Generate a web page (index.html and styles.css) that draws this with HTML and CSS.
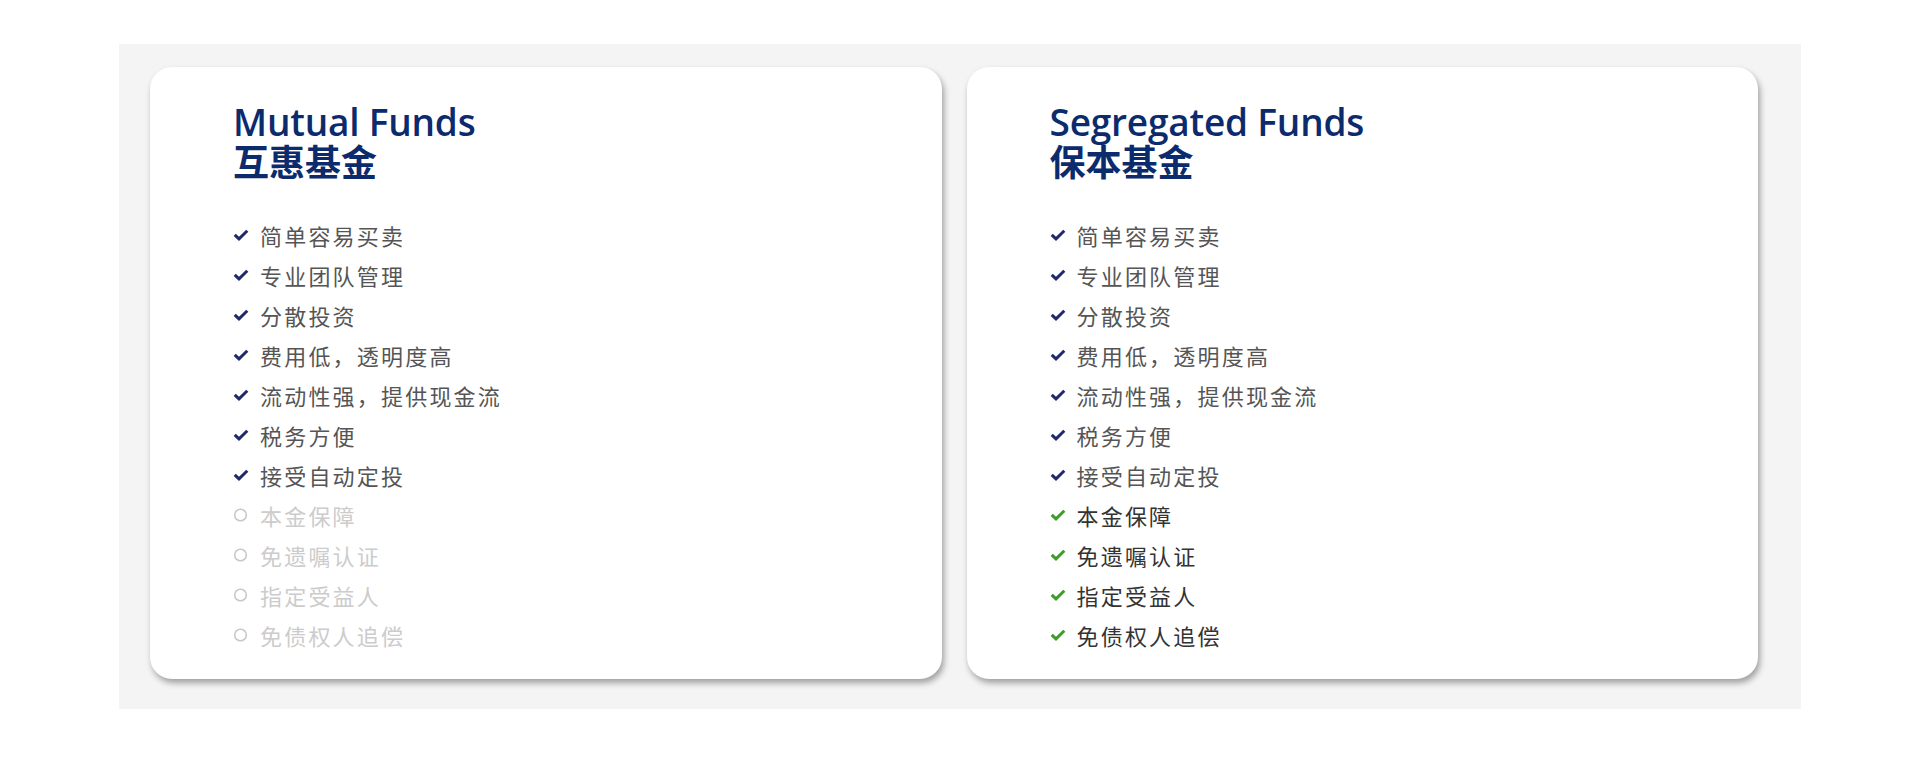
FILE: index.html
```html
<!DOCTYPE html>
<html lang="zh">
<head>
<meta charset="utf-8">
<link rel="stylesheet" href="styles.css">
</head>
<body>
<section class="compare">
  <div class="card">
    <h2 class="title"><span class="en">Mutual Funds</span><span class="zh">互惠基金</span></h2>
    <ul class="features">
      <li class="yes"><svg class="ico" viewBox="0 0 16 12"><path d="M1.7 5.8 L6 9.9 L14.3 1.8"/></svg>简单容易买卖</li>
      <li class="yes"><svg class="ico" viewBox="0 0 16 12"><path d="M1.7 5.8 L6 9.9 L14.3 1.8"/></svg>专业团队管理</li>
      <li class="yes"><svg class="ico" viewBox="0 0 16 12"><path d="M1.7 5.8 L6 9.9 L14.3 1.8"/></svg>分散投资</li>
      <li class="yes"><svg class="ico" viewBox="0 0 16 12"><path d="M1.7 5.8 L6 9.9 L14.3 1.8"/></svg>费用低，透明度高</li>
      <li class="yes"><svg class="ico" viewBox="0 0 16 12"><path d="M1.7 5.8 L6 9.9 L14.3 1.8"/></svg>流动性强，提供现金流</li>
      <li class="yes"><svg class="ico" viewBox="0 0 16 12"><path d="M1.7 5.8 L6 9.9 L14.3 1.8"/></svg>税务方便</li>
      <li class="yes"><svg class="ico" viewBox="0 0 16 12"><path d="M1.7 5.8 L6 9.9 L14.3 1.8"/></svg>接受自动定投</li>
      <li class="no"><svg class="ico ring" viewBox="0 0 16 16"><circle cx="7.5" cy="8" r="5.8"/></svg>本金保障</li>
      <li class="no"><svg class="ico ring" viewBox="0 0 16 16"><circle cx="7.5" cy="8" r="5.8"/></svg>免遗嘱认证</li>
      <li class="no"><svg class="ico ring" viewBox="0 0 16 16"><circle cx="7.5" cy="8" r="5.8"/></svg>指定受益人</li>
      <li class="no"><svg class="ico ring" viewBox="0 0 16 16"><circle cx="7.5" cy="8" r="5.8"/></svg>免债权人追偿</li>
    </ul>
  </div>
  <div class="card">
    <h2 class="title"><span class="en">Segregated Funds</span><span class="zh">保本基金</span></h2>
    <ul class="features">
      <li class="yes"><svg class="ico" viewBox="0 0 16 12"><path d="M1.7 5.8 L6 9.9 L14.3 1.8"/></svg>简单容易买卖</li>
      <li class="yes"><svg class="ico" viewBox="0 0 16 12"><path d="M1.7 5.8 L6 9.9 L14.3 1.8"/></svg>专业团队管理</li>
      <li class="yes"><svg class="ico" viewBox="0 0 16 12"><path d="M1.7 5.8 L6 9.9 L14.3 1.8"/></svg>分散投资</li>
      <li class="yes"><svg class="ico" viewBox="0 0 16 12"><path d="M1.7 5.8 L6 9.9 L14.3 1.8"/></svg>费用低，透明度高</li>
      <li class="yes"><svg class="ico" viewBox="0 0 16 12"><path d="M1.7 5.8 L6 9.9 L14.3 1.8"/></svg>流动性强，提供现金流</li>
      <li class="yes"><svg class="ico" viewBox="0 0 16 12"><path d="M1.7 5.8 L6 9.9 L14.3 1.8"/></svg>税务方便</li>
      <li class="yes"><svg class="ico" viewBox="0 0 16 12"><path d="M1.7 5.8 L6 9.9 L14.3 1.8"/></svg>接受自动定投</li>
      <li class="plus"><svg class="ico" viewBox="0 0 16 12"><path d="M1.7 5.8 L6 9.9 L14.3 1.8"/></svg>本金保障</li>
      <li class="plus"><svg class="ico" viewBox="0 0 16 12"><path d="M1.7 5.8 L6 9.9 L14.3 1.8"/></svg>免遗嘱认证</li>
      <li class="plus"><svg class="ico" viewBox="0 0 16 12"><path d="M1.7 5.8 L6 9.9 L14.3 1.8"/></svg>指定受益人</li>
      <li class="plus"><svg class="ico" viewBox="0 0 16 12"><path d="M1.7 5.8 L6 9.9 L14.3 1.8"/></svg>免债权人追偿</li>
    </ul>
  </div>
</section>
</body>
</html>
```

FILE: styles.css
```css
html, body {
  margin: 0;
  padding: 0;
  background: #ffffff;
}
body {
  font-family: "Open Sans", "Noto Sans", "Noto Sans CJK SC", sans-serif;
  padding-top: 44px;
  padding-left: 119px;
}
.compare {
  width: 1682px;
  box-sizing: border-box;
  background: #f4f4f4;
  padding: 23px 43px 30px 31px;
  display: grid;
  grid-template-columns: 1fr 1fr;
  column-gap: 25px;
}
.card {
  background: #ffffff;
  border-radius: 22px;
  box-shadow: 2px 4px 6px rgba(0, 0, 0, 0.35);
  padding: 34px 83px 24px;
}
.title {
  margin: 0 0 36px;
  color: #0c2b6d;
  font-size: 37px;
}
.title .en {
  display: block;
  font-weight: 600;
  line-height: 41px;
  letter-spacing: -0.2px;
}
.title .zh {
  display: block;
  font-family: "Noto Sans CJK SC", sans-serif;
  font-size: 36px;
  line-height: 37px;
  font-weight: 700;
}
.features {
  list-style: none;
  margin: 0;
  padding: 0;
}
.features li {
  display: flex;
  align-items: center;
  height: 40px;
  font-family: "Noto Sans CJK SC", sans-serif;
  font-size: 22px;
  letter-spacing: 2.2px;
  color: #555555;
}
.ico {
  width: 16px;
  height: 12px;
  margin-right: 11px;
  flex: none;
  fill: none;
}
.ring {
  height: 16px;
}
.yes .ico path {
  stroke: #1f2a68;
  stroke-width: 3;
}
.plus {
  color: #333333 !important;
}
.plus .ico path {
  stroke: #3f9b2b;
  stroke-width: 3;
}
.no {
  color: #cccccc !important;
}
.no .ico circle {
  stroke: #c8c8c8;
  stroke-width: 1.6;
}
```
